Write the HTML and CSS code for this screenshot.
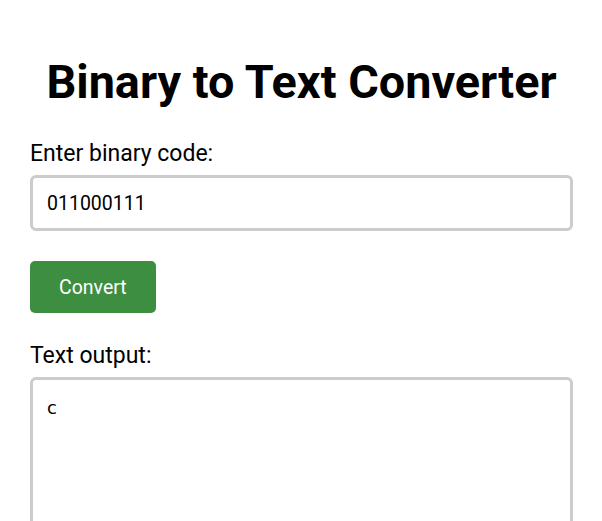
FILE: index.html
```html
<!DOCTYPE html>
<html lang="en">
<head>
    <meta charset="UTF-8" />
    <meta name="viewport" content="width=device-width, initial-scale=1.0"/>
    <title>Binary to Text Converter</title>
    <link rel="stylesheet" href="styles.css">
</head>
<body>
    <div class="container">
        <h1>Binary to Text Converter</h1>

        <label for="binaryInput">Enter binary code:</label>
        <input type="text" id="binaryInput" value="011000111" autocomplete="off" />

        <button id="convertBtn">Convert</button>

        <label for="textOutput">Text output:</label>
        <textarea id="textOutput" readonly>c</textarea>
    </div>
</body>
</html>
```

FILE: styles.css
```css
body {
    font-family: Roboto, 'Liberation Sans', Arial, sans-serif;
    font-size: 19.5px;
    margin: 0;
    padding: 0 29px 0 30px;
    background-color: white;
    color: #000;
}

.container {
    display: flex;
    flex-direction: column;
    align-items: flex-start;
}

h1 {
    align-self: stretch;
    text-align: center;
    font-size: 46.8px;
    font-weight: 700;
    margin: 54px 0 30px;
    line-height: 1.2;
}

label {
    font-size: 23px;
    margin-bottom: 8px;
}

#binaryInput {
    box-sizing: border-box;
    width: 100%;
    height: 56px;
    padding: 0 14px;
    font-family: Roboto, sans-serif;
    font-size: 19.5px;
    border: 3px solid #ccc;
    border-radius: 6px;
    outline: none;
    margin-bottom: 30px;
}

#convertBtn {
    height: 52px;
    padding: 0 29px;
    background-color: #3e8e41;
    color: white;
    border: none;
    border-radius: 5px;
    font-family: Roboto, sans-serif;
    font-size: 19.5px;
    cursor: pointer;
    margin-bottom: 29px;
}

#textOutput {
    box-sizing: border-box;
    width: 100%;
    height: 200px;
    padding: 17px 14px;
    font-family: 'DejaVu Sans', sans-serif;
    font-size: 18px;
    border: 3px solid #ccc;
    border-radius: 6px;
    resize: none;
    outline: none;
}
```
